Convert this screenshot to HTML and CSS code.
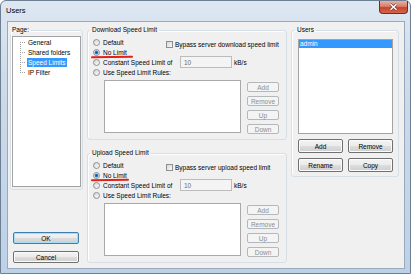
FILE: index.html
```html
<!DOCTYPE html>
<html lang="en">
<head>
    <meta charset="UTF-8">
    <title>Users</title>
    <link rel="stylesheet" href="styles.css">
</head>
<body>
    <div class="window">
        <div class="titlebar">
            <span class="title">Users</span>
            <div class="close">
                <svg width="9" height="8" viewBox="0 0 9 8">
                    <path d="M1.5 1.2 L7.5 6.8 M7.5 1.2 L1.5 6.8" stroke="#6b3a33" stroke-width="2.6"/>
                    <path d="M1.5 1.2 L7.5 6.8 M7.5 1.2 L1.5 6.8" stroke="#fff" stroke-width="1.5"/>
                </svg>
            </div>
        </div>

        <div class="client">
            <div class="page-col">
                <fieldset class="group page-group">
                    <legend>Page:</legend>
                    <div class="tree">
                        <ul>
                            <li><span>General</span></li>
                            <li><span>Shared folders</span></li>
                            <li class="sel"><span>Speed Limits</span></li>
                            <li><span>IP Filter</span></li>
                        </ul>
                    </div>
                </fieldset>
                <div class="btn default wide-btn ok">OK</div>
                <div class="btn wide-btn">Cancel</div>
            </div>

            <div class="limits-col">
                <fieldset class="group limit-group">
                    <legend>Download Speed Limit</legend>
                    <div class="opts">
                        <div class="opt o-default"><span class="radio"></span>Default</div>
                        <div class="check"><span class="box"></span>Bypass server download speed limit</div>
                        <div class="opt o-nolimit"><span class="radio on"></span>No Limit<span class="mark"></span></div>
                        <div class="opt o-const"><span class="radio"></span>Constant Speed Limit of</div>
                        <div class="num">10</div>
                        <div class="unit">kB/s</div>
                        <div class="opt o-rules"><span class="radio"></span>Use Speed Limit Rules:</div>
                    </div>
                    <div class="rules">
                        <div class="rule-list"></div>
                        <div class="rule-btns">
                            <div class="btn off">Add</div>
                            <div class="btn off">Remove</div>
                            <div class="btn off">Up</div>
                            <div class="btn off">Down</div>
                        </div>
                    </div>
                </fieldset>

                <fieldset class="group limit-group upload">
                    <legend>Upload Speed Limit</legend>
                    <div class="opts">
                        <div class="opt o-default"><span class="radio"></span>Default</div>
                        <div class="check"><span class="box"></span>Bypass server upload speed limit</div>
                        <div class="opt o-nolimit"><span class="radio on"></span>No Limit<span class="mark short"></span></div>
                        <div class="opt o-const"><span class="radio"></span>Constant Speed Limit of</div>
                        <div class="num">10</div>
                        <div class="unit">kB/s</div>
                        <div class="opt o-rules"><span class="radio"></span>Use Speed Limit Rules:</div>
                    </div>
                    <div class="rules">
                        <div class="rule-list"></div>
                        <div class="rule-btns">
                            <div class="btn off">Add</div>
                            <div class="btn off">Remove</div>
                            <div class="btn off">Up</div>
                            <div class="btn off">Down</div>
                        </div>
                    </div>
                </fieldset>
            </div>

            <div class="users-col">
                <fieldset class="group users-group">
                    <legend>Users</legend>
                    <div class="user-list">
                        <div class="user sel">admin</div>
                    </div>
                    <div class="user-btns">
                        <div class="btn">Add</div>
                        <div class="btn">Remove</div>
                        <div class="btn">Rename</div>
                        <div class="btn">Copy</div>
                    </div>
                </fieldset>
            </div>
        </div>
    </div>
</body>
</html>
```

FILE: styles.css
```css
body {
    margin: 0;
    background: #fff;
    font-family: "Liberation Sans", Arial, sans-serif;
    font-size: 6.5px;
    color: #000;
}
.window {
    box-sizing: border-box;
    width: 411px;
    height: 274px;
    border: 1px solid #6e7f92;
    border-radius: 6px 6px 0 0;
    background: linear-gradient(#dde7f2, #cddbea 30%, #bcd1e8);
    display: flex;
    flex-direction: column;
}
.titlebar {
    height: 19px;
    flex: none;
    display: flex;
    align-items: center;
    padding-left: 5px;
}
.title {
    font-size: 7.5px;
}
.close {
    box-sizing: border-box;
    margin-left: auto;
    margin-right: 2px;
    align-self: flex-start;
    width: 29px;
    height: 13px;
    border: 1px solid #6a2e25;
    border-top: none;
    border-radius: 0 0 4px 4px;
    background: linear-gradient(#eab0a3, #d97d69 45%, #c7452c 55%, #d5654c);
    display: flex;
    align-items: center;
    justify-content: center;
}
.client {
    flex: 1;
    margin: 1px 5px 4px 6px;
    border: 1px solid #9aa9b9;
    background: #f0f0f0;
    display: grid;
    grid-template-columns: 73px 200px 108px;
    column-gap: 4px;
    padding: 4px 5px 0 2px;
    align-items: start;
}
.group {
    margin: 0;
    border: 1px solid #d5dfe5;
    border-radius: 3px;
    min-width: 0;
    box-shadow: inset 1px 1px 0 #fff;
}
legend {
    padding: 0 2px;
    margin-left: -3px;
    line-height: 8px;
}

/* page tree */
.page-group {
    height: 164px;
    box-sizing: border-box;
    padding: 2px 1px 2px 1px;
}
.page-group legend {
    margin-left: -2px;
}
.tree {
    height: 151px;
    box-sizing: border-box;
    border: 1px solid #a3a3a3;
    background: #fff;
}
.tree ul {
    list-style: none;
    margin: 0;
    padding: 0;
    background: repeating-linear-gradient(#a0a0a0 0 1px, transparent 1px 2px) no-repeat 7px 5px / 1px 30px;
}
.tree li {
    height: 10px;
    display: flex;
    align-items: center;
}
.tree li::before {
    content: "";
    width: 6px;
    height: 1px;
    margin: 0 1px 0 7px;
    background: repeating-linear-gradient(90deg, #a0a0a0 0 1px, transparent 1px 2px);
}
.tree li span {
    padding: 0 1px;
    line-height: 9px;
}
.tree li.sel span {
    background: #3399ff;
    color: #fff;
}

/* buttons */
.btn {
    box-sizing: border-box;
    height: 14px;
    display: flex;
    align-items: center;
    justify-content: center;
    border: 1px solid #707070;
    border-radius: 2px;
    background: linear-gradient(#f3f3f3, #ebebeb 50%, #dddddd 51%, #cfcfcf);
    box-shadow: inset 0 0 0 1px #fbfbfb;
}
.wide-btn {
    width: 66px;
    height: 12px;
    margin: 7px 0 0 3px;
}
.wide-btn.ok {
    margin-top: 42px;
}
.btn.default {
    border-color: #3c7fb1;
    box-shadow: inset 0 0 0 1px #a8dcf5;
}
.btn.off {
    height: 10px;
    border-color: #b3b8bb;
    background: #f4f4f4;
    box-shadow: none;
    color: #8d8d8d;
}

/* speed limit groups */
.limit-group {
    padding: 3px 4px 5px 5px;
}
.upload {
    margin-top: 9px;
}
.opts {
    display: grid;
    grid-template-columns: 73px 14px 52px auto;
    grid-auto-rows: 10px;
}
.opt {
    display: flex;
    align-items: center;
    gap: 3px;
    white-space: nowrap;
}
.o-default { grid-area: 1 / 1; }
.o-nolimit { grid-area: 2 / 1; position: relative; }
.o-const { grid-area: 3 / 1 / 4 / 3; }
.o-rules { grid-area: 4 / 1 / 5 / 5; }
.check {
    grid-area: 1 / 2 / 3 / 5;
    align-self: start;
    margin-top: 4px;
    display: flex;
    align-items: center;
    gap: 2px;
    white-space: nowrap;
}
.radio {
    box-sizing: border-box;
    width: 7px;
    height: 7px;
    border: 1px solid #8e8f8f;
    border-radius: 50%;
    background: linear-gradient(135deg, #d6d6d6, #fbfbfb);
}
.radio.on {
    background: radial-gradient(circle, #0b4fa3 0, #2c86de 1.5px, #e3ebf3 2.3px, #f7f7f7 3px);
}
.box {
    box-sizing: border-box;
    width: 7px;
    height: 7px;
    border: 1px solid #8e8f8f;
    background: linear-gradient(135deg, #d6d6d6, #fbfbfb);
}
.mark {
    position: absolute;
    left: -2px;
    bottom: -1px;
    width: 42px;
    height: 2px;
    border-radius: 1px;
    background: #e3211b;
    transform: rotate(-1deg);
}
.mark.short {
    width: 38px;
}
.num {
    grid-area: 3 / 3;
    align-self: center;
    box-sizing: border-box;
    height: 12px;
    border: 1px solid #bcbcbc;
    background: #f4f4f4;
    color: #6d6d6d;
    padding-left: 3px;
    display: flex;
    align-items: center;
}
.unit {
    grid-area: 3 / 4;
    align-self: center;
    padding-left: 2px;
}
.rules {
    display: flex;
    gap: 6px;
    margin: 3px 0 0 11px;
}
.rule-list {
    box-sizing: border-box;
    width: 137px;
    height: 53px;
    border: 1px solid #a9a9a9;
    background: #fff;
}
.rule-btns {
    width: 32px;
    display: flex;
    flex-direction: column;
    gap: 4px;
    padding-top: 2px;
}

/* users */
.users-group {
    padding: 5px 5px 4px 6px;
}
.user-list {
    box-sizing: border-box;
    height: 95px;
    border: 1px solid #a3a3a3;
    background: #fff;
}
.user {
    height: 8px;
    line-height: 8px;
    padding-left: 1px;
}
.user.sel {
    background: #3399ff;
    color: #fff;
}
.user-btns {
    display: grid;
    grid-template-columns: 45px 45px;
    gap: 5px;
    margin-top: 5px;
}
```
